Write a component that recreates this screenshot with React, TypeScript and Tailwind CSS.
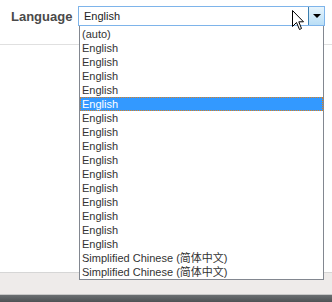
import React from "react";

const options = [
  "(auto)",
  "English",
  "English",
  "English",
  "English",
  "English",
  "English",
  "English",
  "English",
  "English",
  "English",
  "English",
  "English",
  "English",
  "English",
  "English",
  "Simplified Chinese (简体中文)",
  "Simplified Chinese (简体中文)",
];

function Cursor() {
  return (
    <svg width="13" height="21" viewBox="0 0 13 21" className="absolute left-[292px] top-[10px]">
      <path
        d="M0.5 0.5 L0.5 16.5 L4.5 12.5 L7.5 19.5 L9.5 18.5 L6.8 11.8 L11.5 11.8 Z"
        fill="#fff"
        stroke="#000"
        strokeWidth="1"
        strokeLinejoin="miter"
      />
    </svg>
  );
}

export default function App() {
  const selected = 5;

  return (
    <div className="relative w-[332px] h-[302px] bg-white overflow-hidden font-['Liberation_Sans',Arial,sans-serif]">
      <div className="h-[45px] border-b border-[#e0e0e0] flex items-start">
        <div className="pl-[11px] pt-[9px] w-[78px] text-[13px] font-bold text-[#4a4a4a] leading-[15px]">
          Language
        </div>
        <div className="mt-[6px] w-[247px] h-[20px] border border-[#7eb4ea] flex">
          <div className="flex-1 pl-[5px] text-[11px] leading-[18px] text-[#222]">English</div>
          <div className="w-[16px] h-[18px] border-l border-[#3c7fb1] bg-gradient-to-b from-[#e6f4fc] to-[#b9def6] flex items-center justify-center">
            <div className="w-0 h-0 border-l-[4px] border-r-[4px] border-t-[4px] border-l-transparent border-r-transparent border-t-black" />
          </div>
        </div>
      </div>

      <div className="h-[227px]" />

      <div className="h-[23px] border-t border-[#d6d6d6] bg-[#eeebea] border-b border-b-[#c8c8c8]" />
      <div className="h-[7px] bg-gradient-to-b from-[#6b6f72] to-[#4e5255]" />

      <div className="absolute left-[79px] top-[26px] w-[245px] h-[254px] bg-white border-x border-b border-[#828790] pt-[1px]">
        {options.map((o, i) => (
          <div
            key={i}
            className={`h-[14px] pl-[2px] text-[11px] leading-[14px] whitespace-nowrap font-['Liberation_Sans','Noto_Sans_CJK_SC',sans-serif] ${
              i === selected
                ? "bg-[#3399ff] text-white outline outline-1 outline-dotted outline-[#e0801a] -outline-offset-1"
                : "text-[#333]"
            }`}
          >
            {o}
          </div>
        ))}
      </div>

      <Cursor />
    </div>
  );
}
